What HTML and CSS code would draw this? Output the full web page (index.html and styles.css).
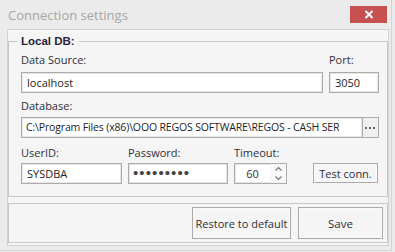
FILE: index.html
```html
<!DOCTYPE html>
<html>
<head>
<meta charset="utf-8">
<link rel="stylesheet" href="styles.css">
</head>
<body>
<div class="window">
  <div class="titlebar">
    <span class="title">Connection settings</span>
    <div class="close"><svg width="10" height="9" viewBox="0 0 10 9"><path d="M1.5 1 L8.5 8 M8.5 1 L1.5 8" stroke="#fff" stroke-width="2" fill="none"/></svg></div>
  </div>
  <div class="panel">
    <fieldset class="group">
      <legend>Local DB:</legend>
      <div class="row">
        <div class="field grow">
          <label>Data Source:</label>
          <div class="input">localhost</div>
        </div>
        <div class="field port">
          <label>Port:</label>
          <div class="input">3050</div>
        </div>
      </div>
      <div class="field db">
        <label>Database:</label>
        <div class="combo">
          <div class="input path">C:\Program Files (x86)\OOO REGOS SOFTWARE\REGOS - CASH SER</div>
          <div class="ellipsis"><svg width="11" height="3" viewBox="0 0 11 3"><rect x="0" y="1" width="2" height="2" fill="#666"/><rect x="4" y="1" width="2" height="2" fill="#666"/><rect x="8" y="1" width="2" height="2" fill="#666"/></svg></div>
        </div>
      </div>
      <div class="row row3">
        <div class="field user">
          <label>UserID:</label>
          <div class="input">SYSDBA</div>
        </div>
        <div class="field pass">
          <label>Password:</label>
          <div class="input dots">•••••••••</div>
        </div>
        <div class="field timeout">
          <label>Timeout:</label>
          <div class="spin">
            <div class="spin-val">60</div>
            <div class="spin-btns">
              <svg width="15" height="19" viewBox="0 0 15 19"><path d="M4.5 6.5 L7.5 3.5 L10.5 6.5" stroke="#777" stroke-width="1.2" fill="none"/><path d="M4.5 12.5 L7.5 15.5 L10.5 12.5" stroke="#777" stroke-width="1.2" fill="none"/></svg>
            </div>
          </div>
        </div>
        <button class="btn test">Test conn.</button>
      </div>
    </fieldset>
    <div class="footer">
      <button class="btn restore">Restore to default</button>
      <button class="btn save">Save</button>
    </div>
  </div>
</div>
</body>
</html>
```
FILE: styles.css
```css
* { box-sizing: border-box; }
html, body { margin: 0; padding: 0; }
body {
  width: 395px;
  height: 252px;
  background: #ebebeb;
  font-family: "Open Sans", "Liberation Sans", sans-serif;
  font-size: 11px;
  color: #2e2e3a;
  overflow: hidden;
}
.window {
  width: 392px;
  height: 251px;
  background: #ebebeb;
  border-right: 1px solid #d4d4d4;
  border-bottom: 1px solid #d4d4d4;
}
.titlebar {
  height: 29px;
  display: flex;
  align-items: flex-start;
  justify-content: space-between;
  padding: 6px 4px 0 8px;
}
.title {
  font-size: 13px;
  line-height: 18px;
  color: #a6a6a6;
}
.close {
  width: 37px;
  height: 17px;
  background: #c75050;
  display: flex;
  align-items: center;
  justify-content: center;
}
.panel {
  margin-left: 7px;
  width: 382px;
  height: 217px;
  background: #f5f5f5;
  border: 1px solid #d2d2d2;
  padding: 3px 0 0 0;
  display: flex;
  flex-direction: column;
}
.group {
  margin: 0;
  border: 1px solid #c8c8c8;
  padding: 3px 8px 0 12px;
  height: 164px;
  min-width: 0;
}
.group legend {
  font-family: "Liberation Sans", sans-serif;
  font-weight: bold;
  font-size: 11.5px;
  line-height: 16px;
  padding: 0 4px;
  margin-left: -4px;
  color: #26263a;
}
.row {
  display: flex;
  gap: 6px;
}
.field {
  display: flex;
  flex-direction: column;
}
.field label {
  line-height: 15px;
  height: 15px;
  margin-bottom: 5px;
}
.grow { flex: 1; }
.port { width: 50px; }
.input {
  height: 21px;
  background: #fff;
  border: 1px solid #ababab;
  box-shadow: inset 0 0 0 1px #e6e6e6;
  padding: 0 5px;
  line-height: 19px;
  white-space: nowrap;
  overflow: hidden;
  color: #1e1e28;
}
.db { margin-top: 5px; }
.db label { margin-bottom: 4px; }
.combo { display: flex; }
.path {
  flex: 1;
  min-width: 0;
  border-right: none;
  font-size: 10.5px;
  letter-spacing: -0.15px;
  padding-left: 4px;
}
.ellipsis {
  width: 17px;
  height: 21px;
  background: #f0f0f0;
  border: 1px solid #ababab;
  display: flex;
  align-items: center;
  justify-content: center;
}
.row3 { margin-top: 7px; align-items: flex-end; }
.row3 label { margin-bottom: 3px; }
.user { width: 101px; }
.pass { width: 100px; }
.timeout { width: 53px; }
.dots {
  font-family: "Liberation Sans", sans-serif;
  font-size: 15px;
  letter-spacing: 1.1px;
  color: #444;
  padding-left: 4px;
  line-height: 18px;
}
.spin {
  height: 21px;
  display: flex;
  background: #fff;
  border: 1px solid #ababab;
  box-shadow: inset 0 0 0 1px #e6e6e6;
}
.spin-val {
  flex: 1;
  text-align: center;
  line-height: 19px;
}
.spin-btns {
  width: 16px;
  display: flex;
  align-items: center;
  justify-content: center;
  background: #f8f8f8;
}
.btn {
  font-family: inherit;
  font-size: 11px;
  color: #2e2e3a;
  background: #f5f5f5;
  border: 1px solid #a9a9a9;
  box-shadow: inset 0 0 0 1px #f9f9f9;
  padding: 0;
  margin: 0;
}
.test {
  width: 65px;
  height: 20px;
  margin-left: 20px;
  margin-bottom: 1px;
}
.footer {
  margin-top: 6px;
  height: 40px;
  border: 1px solid #c8c8c8;
  display: flex;
  justify-content: flex-end;
  align-items: center;
  gap: 7px;
  padding-right: 4px;
}
.restore { width: 99px; height: 32px; }
.save { width: 85px; height: 32px; font-size: 11.5px; }
```
